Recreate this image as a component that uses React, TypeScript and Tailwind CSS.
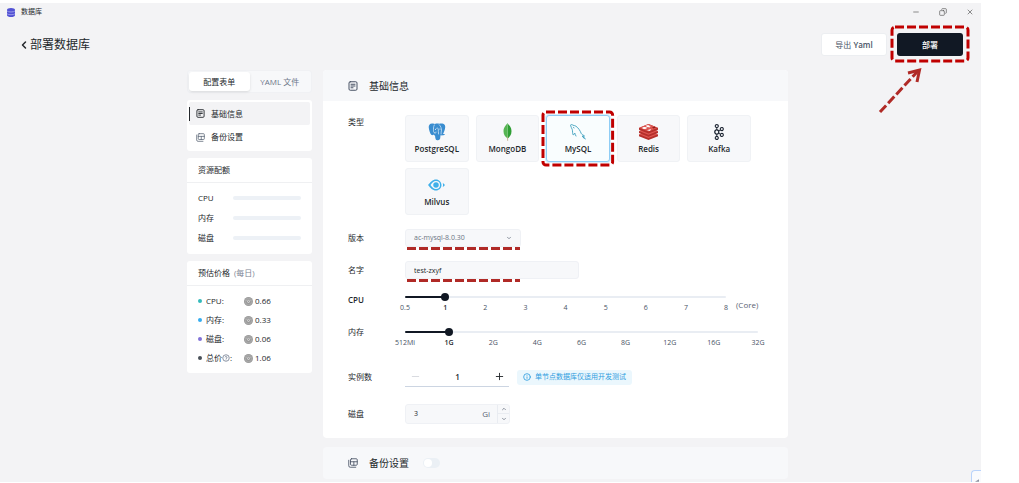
import { useState } from "react";
import type { ReactNode } from "react";
import { SiApachekafka } from "react-icons/si";
import { ChevronDown, ChevronLeft, ChevronUp, Copy, Info, Minus, Plus, X } from "lucide-react";

function FormIcon({ className }: { className: string }) {
  return (
    <svg viewBox="0 0 20 20" className={className} fill="none" stroke="currentColor" strokeWidth="2" strokeLinecap="round">
      <rect x="2" y="1.5" width="16" height="17" rx="2.5" />
      <path d="M6 6.5h8M6 10h8M6 13.5h4" />
    </svg>
  );
}

function BackupIcon({ className }: { className: string }) {
  return (
    <svg viewBox="0 0 20 20" className={className} fill="none" stroke="currentColor" strokeWidth="1.7" strokeLinecap="round">
      <rect x="5" y="1.5" width="13.5" height="13" rx="2" />
      <path d="M5 7.5h13.5M11.7 7.5v7M1.5 4.5v11a3 3 0 0 0 3 3h11" />
    </svg>
  );
}

function DatabaseLogo() {
  return (
    <svg viewBox="0 0 16 18" className="h-[9px] w-2" aria-hidden="true">
      <path d="M0 3.6C0 1.6 3.6 0 8 0s8 1.6 8 3.6v10.8C16 16.4 12.4 18 8 18s-8-1.6-8-3.6z" fill="#5252d4" />
      <path d="M0 6c2.5 2.6 13.5 2.6 16 0M0 11.5c2.5 2.6 13.5 2.6 16 0" fill="none" stroke="#c9c9f7" strokeWidth="1.2" />
    </svg>
  );
}

function ElephantIcon() {
  return (
    <svg viewBox="0 0 36 36" className="h-[18px] w-[18px]">
      <path
        d="M10 1C4 0 1 4 1.500 9c.5 5 2.500 12 5 14.500 1.500 1.500 3 1 4.500-.5.5 1.200 1.500 1.700 3 1.800.5 2 .3 9.200 4.500 9.700 4 .5 5.800-1.500 6-5l.5-5c2.500.5 6.500.5 9.500-2-1.200-.6-3-.4-4.500-.7C33 17 36 8 33.500 4 31 .5 26 .5 22.500 1.500 19 .5 16 .8 14 1.800 13 1.300 11.500 1.200 10 1z"
        fill="#3a8dd0"
      />
      <path
        d="M12.500 4C10.500 8 11 12 11 15.500c0 2 .5 4 2.500 4.500M22.500 3.500c3 3 4.500 7 4.500 10.500 0 3-1.500 5-1 8M17 10.500c1-1 3-.5 3.500 1 .8 3-.5 7 .5 10.500M13.500 20c1.500 1 2.500 0 2.500-2"
        fill="none"
        stroke="#d8ebf8"
        strokeWidth="1.500"
        strokeLinecap="round"
      />
      <circle cx="15" cy="12.500" r="1.100" fill="#fff" />
      <circle cx="24" cy="12" r="1.100" fill="#fff" />
    </svg>
  );
}

function LeafIcon() {
  return (
    <svg viewBox="0 0 18 36" className="h-[18px] w-[9px]">
      <path d="M9 0c1 3 8 7 8 16.500C17 24 13 28 9.500 31z" fill="#2f9e34" />
      <path d="M9 0c-1 3-8 7-8 16.500C1 24 5 28 9.500 31z" fill="#56b553" />
      <path d="M8.500 27h1.500l.3 8.500H8.700z" fill="#b8a27c" />
    </svg>
  );
}

function DolphinIcon() {
  return (
    <svg viewBox="0 0 32 32" className="h-4 w-4" fill="none" stroke="#3d9fbd" strokeWidth="1.800" strokeLinecap="round" strokeLinejoin="round">
      <path d="M12 24c-1-2.500-2-3.500-2.500-6C8 20 7.500 22 6.500 22 4.500 19 5.500 14 4.500 11 3.500 8 1.500 5.500 1 2.500 1 1 4 .5 6 2.500c2 .5 4 .5 6 2C17 8 20 13 22.500 19c1 2 4 3 6.500 5-2 0-3 0-3.500.5 1.500 1.500 4 3 5 5.500" />
      <path d="M7 6.500l1 1.500" />
      <path d="M25 24.500l3.500 4" strokeWidth="2.200" />
    </svg>
  );
}

function RedisIcon() {
  return (
    <svg viewBox="0 0 38 32" className="h-4 w-[19px]">
      <path d="M0 21l19-7 19 7v3.500L19 32 0 24.500z" fill="#b5302b" />
      <path d="M0 20.500l19-7 19 7-19 7.500z" fill="#dd5550" />
      <path d="M0 14.500l19-7 19 7V18l-19 7.500L0 18z" fill="#b5302b" />
      <path d="M0 14l19-7 19 7-19 7.500z" fill="#dd5550" />
      <path d="M0 8l19-8 19 8v3.500L19 19 0 11.500z" fill="#b5302b" />
      <path d="M0 7.500L19 0l19 7.500L19 15z" fill="#dd5550" />
      <path d="M18 1.500l2 2 4 .3-3 1.600.3 2-3.300-1.400-4 .8 1.500-2-2.500-1.600 3.500-.2z" fill="#fff" />
      <ellipse cx="11" cy="8" rx="4.500" ry="1.900" fill="#fff" />
      <path d="M16 12.500l8-2.500-2 4z" fill="#fff" />
      <path d="M26 7l5-2 3 2-5 2z" fill="#8f1f1a" />
    </svg>
  );
}

function MilvusIcon() {
  return (
    <svg viewBox="0 0 34 24" className="h-3 w-[17px]" fill="#3fb0ea">
      <path fillRule="evenodd" d="M0 12C5 6 9 1 16 1c6 0 11 5 11 11s-5 11-11 11C9 23 5 18 0 12zm5 0c3 4 6 8 11 8a8 8 0 0 0 0-16c-5 0-8 4-11 8z" />
      <circle cx="16" cy="12" r="5.500" />
      <path d="M29.500 7.500L34 12l-4.500 4.500c1-3 1-6 0-9z" />
    </svg>
  );
}

function CoinIcon() {
  return (
    <svg viewBox="0 0 18 18" className="h-[9px] w-[9px]" aria-hidden="true">
      <circle cx="9" cy="9" r="9" fill="#999" />
      <circle cx="9" cy="9" r="6.500" fill="none" stroke="#bdbdbd" strokeWidth="1" />
      <path d="M5.500 7l3.500 5 3.500-5M7 6.500h4" fill="none" stroke="#dedede" strokeWidth="1.500" />
    </svg>
  );
}

function DashedFrame() {
  return (
    <svg className="h-full w-full overflow-visible" aria-hidden="true">
      <rect width="100%" height="100%" rx="3" fill="none" stroke="#c00000" strokeWidth="3" strokeDasharray="9 3" />
    </svg>
  );
}

function DashedLine() {
  return (
    <svg className="pointer-events-none absolute top-full left-[2px] h-[3px] w-[113px]" aria-hidden="true">
      <path d="M0 1.500h113" stroke="#b02a26" strokeWidth="3" strokeDasharray="9 3" />
    </svg>
  );
}

type SliderProps = { label: string; marks: string[]; value: number; onChange: (v: number) => void };

function Slider({ label, marks, value, onChange }: SliderProps) {
  const last = marks.length - 1;
  return (
    <div className="flex-1 pt-[6px]">
      <div className="relative h-[2px] rounded-full bg-[#e9edf3]">
        <div className="h-full rounded-full bg-[#111824]" style={{ width: `${(value / last) * 100}%` }} />
        <input
          type="range"
          aria-label={label}
          min={0}
          max={last}
          value={value}
          onChange={(e) => onChange(Number(e.target.value))}
          className="absolute -top-[3px] -left-1 h-2 w-[calc(100%+8px)] cursor-pointer appearance-none bg-transparent [&::-webkit-slider-thumb]:h-2 [&::-webkit-slider-thumb]:w-2 [&::-webkit-slider-thumb]:appearance-none [&::-webkit-slider-thumb]:rounded-full [&::-webkit-slider-thumb]:bg-[#111824]"
        />
      </div>
      <div className="mt-[6px] flex justify-between text-[7px] leading-[8px] font-normal text-[#485264]">
        {marks.map((m, i) => (
          <span key={m} className={i === value ? "flex w-0 justify-center font-semibold whitespace-nowrap text-[#24282c]" : "flex w-0 justify-center whitespace-nowrap"}>
            {m}
          </span>
        ))}
      </div>
    </div>
  );
}

function Card({ title, children }: { title: ReactNode; children: ReactNode }) {
  return (
    <section className="rounded-[3px] bg-white">
      <h3 className="flex h-[25px] items-center gap-1 border-b border-[#eff0f2] px-[11px]">{title}</h3>
      {children}
    </section>
  );
}

const engines = [
  { name: "PostgreSQL", icon: <ElephantIcon /> },
  { name: "MongoDB", icon: <LeafIcon /> },
  { name: "MySQL", icon: <DolphinIcon /> },
  { name: "Redis", icon: <RedisIcon /> },
  { name: "Kafka", icon: <SiApachekafka className="h-4 w-4 text-[#1d2532]" /> },
  { name: "Milvus", icon: <MilvusIcon /> },
];

const prices = [
  { name: "CPU", value: "0.66", dot: "bg-[#33babb]", help: false },
  { name: "内存", value: "0.33", dot: "bg-[#36adef]", help: false },
  { name: "磁盘", value: "0.06", dot: "bg-[#8172d8]", help: false },
  { name: "总价", value: "1.06", dot: "bg-[#485058]", help: true },
];

export default function App() {
  const [engine, setEngine] = useState("MySQL");
  const [cpu, setCpu] = useState(1);
  const [memory, setMemory] = useState(1);
  const [replicas, setReplicas] = useState(1);
  const [disk, setDisk] = useState(3);

  return (
    <div className="flex min-h-screen bg-white pt-[3px] pr-[38px] pb-px font-['Open_Sans','Noto_Sans_CJK_SC',sans-serif] text-[8px] leading-[14px] text-[#24282c]">
      <div className="relative flex-1 overflow-hidden bg-[#f3f3f5]">
        <div className="flex h-[18px] items-center gap-[6px] px-[7px] text-[7px]">
          <DatabaseLogo />
          <span>数据库</span>
          <div className="ml-auto flex gap-[19px] text-[#555]">
            <button aria-label="最小化"><Minus className="h-2 w-2" /></button>
            <button aria-label="还原"><Copy className="h-2 w-2 -scale-x-100" /></button>
            <button aria-label="关闭"><X className="h-2 w-2" /></button>
          </div>
        </div>

        <header className="flex h-[47px] items-center px-[18px]">
          <button aria-label="返回"><ChevronLeft className="h-3 w-3" strokeWidth={3} /></button>
          <h1 className="text-[12px] leading-4">部署数据库</h1>
          <button className="ml-auto h-[23px] w-[66px] rounded-[3px] border border-[#eceef1] bg-white text-[#485264]">
            导出 <span className="font-semibold">Yaml</span>
          </button>
          <div className="relative ml-[10px]">
            <button className="block h-[23px] w-[66px] rounded-[3px] bg-[#111824] font-medium text-white">部署</button>
            <div className="pointer-events-none absolute -inset-x-[5px] -top-[6px] -bottom-[5px]"><DashedFrame /></div>
            <svg viewBox="0 0 48 48" className="pointer-events-none absolute top-[34px] -left-[20px] h-12 w-12" fill="none" stroke="#b02a26" strokeWidth="3" aria-hidden="true">
              <path d="M3 45L41 4" strokeDasharray="9 3" />
              <path d="M31 6L42.500 3 40 15" />
            </svg>
          </div>
        </header>

        <main className="flex justify-center gap-[11px] pt-[2px] pr-[6px]">
          <aside className="flex w-[125px] flex-col gap-[7px]">
            <div className="grid h-[23px] grid-cols-2 rounded-[3px] border border-[#f0f1f4] bg-[#f7f8fa] p-px">
              <button className="rounded-[3px] bg-white shadow-sm">配置表单</button>
              <button className="text-[#6b7689]">YAML 文件</button>
            </div>
            <nav className="rounded-[3px] bg-white p-[2px]">
              <a href="#basic" className="flex h-[23px] items-center rounded-[2px] bg-[#f3f3f5]">
                <span className="h-[14px] w-px bg-[#24282c]" />
                <FormIcon className="mx-[6px] h-[9px] w-[9px]" />
                基础信息
              </a>
              <a href="#backup" className="flex h-6 items-center">
                <BackupIcon className="mr-[6px] ml-[7px] h-[9px] w-[9px] text-[#5a6575]" />
                备份设置
              </a>
            </nav>

            <Card title="资源配额">
              <ul className="flex flex-col gap-[6px] px-[11px] pt-2 pb-[9px]">
                {["CPU", "内存", "磁盘"].map((r) => (
                  <li key={r} className="flex items-center">
                    <span className="w-[35px]">{r}</span>
                    <span className="h-1 flex-1 rounded-full bg-[#edf1f6]" />
                  </li>
                ))}
              </ul>
            </Card>

            <Card title={<>预估价格 <span className="text-[#7b8494]">(每日)</span></>}>
              <ul className="flex flex-col gap-[5px] px-[11px] py-2">
                {prices.map((p) => (
                  <li key={p.name} className="flex items-center">
                    <span className={`mr-[4px] h-1 w-1 rounded-full ${p.dot}`} />
                    <span className="flex w-[38px] items-center">
                      {p.name}
                      {p.help && (
                        <svg viewBox="0 0 16 16" className="h-2 w-2" fill="none" stroke="#667085" strokeWidth="1.500">
                          <circle cx="8" cy="8" r="6.500" />
                          <path d="M6 6.500a2 2 0 1 1 2 2.500v.5M8 11v1.300" />
                        </svg>
                      )}
                      :
                    </span>
                    <CoinIcon />
                    <span className="ml-[2px]">{p.value}</span>
                  </li>
                ))}
              </ul>
            </Card>
          </aside>

          <div className="flex w-[465px] flex-col gap-[9px]">
            <section id="basic" className="overflow-hidden rounded-[4px] bg-white">
              <h2 className="flex h-[31px] items-center gap-[11px] bg-[#f7f8fa] px-[25px] text-[10px]">
                <FormIcon className="h-[10px] w-[10px] text-[#485264]" />
                基础信息
              </h2>
              <div className="py-[14px] pr-[30px] pl-[25px]">
                <div className="flex">
                  <span className="w-[57px]">类型</span>
                  <div className="grid w-[346px] grid-cols-5 gap-x-[7px] gap-y-[6px]">
                    {engines.map((e) => (
                      <div key={e.name} className="relative">
                        <button
                          onClick={() => setEngine(e.name)}
                          aria-pressed={engine === e.name}
                          className={
                            engine === e.name
                              ? "flex h-[47px] w-full flex-col items-center rounded-[3px] border border-[#8fcdf5] bg-[#f9fdfe] pt-[6px] font-semibold shadow-[0_0_0_1px_#d9effc]"
                              : "flex h-[47px] w-full flex-col items-center rounded-[3px] border border-[#f0f2f5] bg-[#f7f8fa] pt-[6px] font-semibold"
                          }
                        >
                          <span className="flex h-[19px] items-center">{e.icon}</span>
                          <span className="mt-px">{e.name}</span>
                        </button>
                        {e.name === "MySQL" && (
                          <div className="pointer-events-none absolute -inset-[3px]"><DashedFrame /></div>
                        )}
                      </div>
                    ))}
                  </div>
                </div>

                <div className="mt-[14px] flex items-center">
                  <label htmlFor="version" className="w-[57px]">版本</label>
                  <div className="relative">
                    <select id="version" className="block h-[18px] w-[116px] appearance-none rounded-[3px] border border-[#eff1f5] bg-[#f7f8fa] px-2 text-[7px] text-[#6b7483]">
                      <option>ac-mysql-8.0.30</option>
                    </select>
                    <ChevronDown className="pointer-events-none absolute top-[6px] right-[9px] h-[6px] w-[6px] text-[#6b7483]" strokeWidth={3} />
                    <DashedLine />
                  </div>
                </div>

                <div className="mt-[14px] flex items-center">
                  <label htmlFor="name" className="w-[57px]">名字</label>
                  <div className="relative">
                    <input id="name" defaultValue="test-zxyf" className="block h-[18px] w-[174px] rounded-[3px] border border-[#eff1f5] bg-[#f7f8fa] px-2 text-[7px]" />
                    <DashedLine />
                  </div>
                </div>

                <div className="mt-[11px] flex items-start">
                  <span className="w-[57px] leading-5 font-semibold">CPU</span>
                  <Slider label="CPU" marks={["0.5", "1", "2", "3", "4", "5", "6", "7", "8"]} value={cpu} onChange={setCpu} />
                  <span className="mt-2 ml-[10px] w-[22px] text-[#5a6373]">(Core)</span>
                </div>

                <div className="mt-[13px] flex items-start">
                  <span className="w-[57px]">内存</span>
                  <Slider label="内存" marks={["512Mi", "1G", "2G", "4G", "6G", "8G", "12G", "16G", "32G"]} value={memory} onChange={setMemory} />
                </div>

                <div className="mt-5 flex items-center">
                  <label htmlFor="replicas" className="w-[57px]">实例数</label>
                  <div className="flex h-5 w-[104px] items-center border-b border-[#ccd5e2] pr-1 pl-[5px]">
                    <button aria-label="减少" onClick={() => setReplicas(Math.max(1, replicas - 1))}><Minus className="h-[11px] w-[11px] text-[#d5d8dd]" /></button>
                    <input id="replicas" value={replicas} onChange={(e) => setReplicas(Number(e.target.value) || 1)} className="w-0 flex-1 bg-transparent text-center font-semibold" />
                    <button aria-label="增加" onClick={() => setReplicas(replicas + 1)}><Plus className="h-[11px] w-[11px]" /></button>
                  </div>
                  <span className="ml-2 flex h-[15px] items-center gap-1 rounded-[3px] bg-[#ebf7fd] px-[6px] text-[7px] text-[#2f9de0]">
                    <Info className="h-2 w-2" strokeWidth={2.5} />
                    单节点数据库仅适用开发测试
                  </span>
                </div>

                <div className="mt-[17px] flex items-center">
                  <label htmlFor="disk" className="w-[57px]">磁盘</label>
                  <div className="flex h-5 w-[105px] items-center rounded-[3px] border border-[#eff1f5] bg-[#f7f8fa] pl-2">
                    <input id="disk" value={disk} onChange={(e) => setDisk(Number(e.target.value) || 0)} className="w-0 flex-1 bg-transparent text-[7px]" />
                    <span className="mr-[7px] text-[#5a6373]">Gi</span>
                    <div className="grid h-full w-3 grid-rows-2 border-l border-[#e9ecf1] text-[#6b7483]">
                      <button aria-label="增大磁盘" className="flex items-center justify-center border-b border-[#e9ecf1]" onClick={() => setDisk(disk + 1)}><ChevronUp className="h-[6px] w-[6px]" strokeWidth={3} /></button>
                      <button aria-label="减小磁盘" className="flex items-center justify-center" onClick={() => setDisk(Math.max(1, disk - 1))}><ChevronDown className="h-[6px] w-[6px]" strokeWidth={3} /></button>
                    </div>
                  </div>
                </div>
              </div>
            </section>

            <section id="backup" className="rounded-[4px] bg-[#f7f8fa]">
              <h2 className="flex h-8 items-center px-[25px] text-[10px]">
                <BackupIcon className="mr-[11px] h-[10px] w-[10px] text-[#485264]" />
                <label htmlFor="backup-switch">备份设置</label>
                <input
                  id="backup-switch"
                  type="checkbox"
                  role="switch"
                  className="ml-[14px] flex h-[10px] w-[17px] appearance-none items-center rounded-full bg-[#ebf0f5] px-px before:h-2 before:w-2 before:rounded-full before:bg-white checked:justify-end checked:bg-[#111824]"
                />
              </h2>
            </section>
          </div>
        </main>

        <div className="absolute right-0 bottom-0 flex h-3 w-[10px] items-end justify-center rounded-tl-[4px] border-t border-l border-[#b9d3fb] bg-[#f9fafd]">
          <svg viewBox="0 0 6 4" className="h-[3px] w-1" aria-hidden="true"><path d="M0 4l3-2 3-2v4z" fill="#8b93a1" /></svg>
        </div>
      </div>
    </div>
  );
}
